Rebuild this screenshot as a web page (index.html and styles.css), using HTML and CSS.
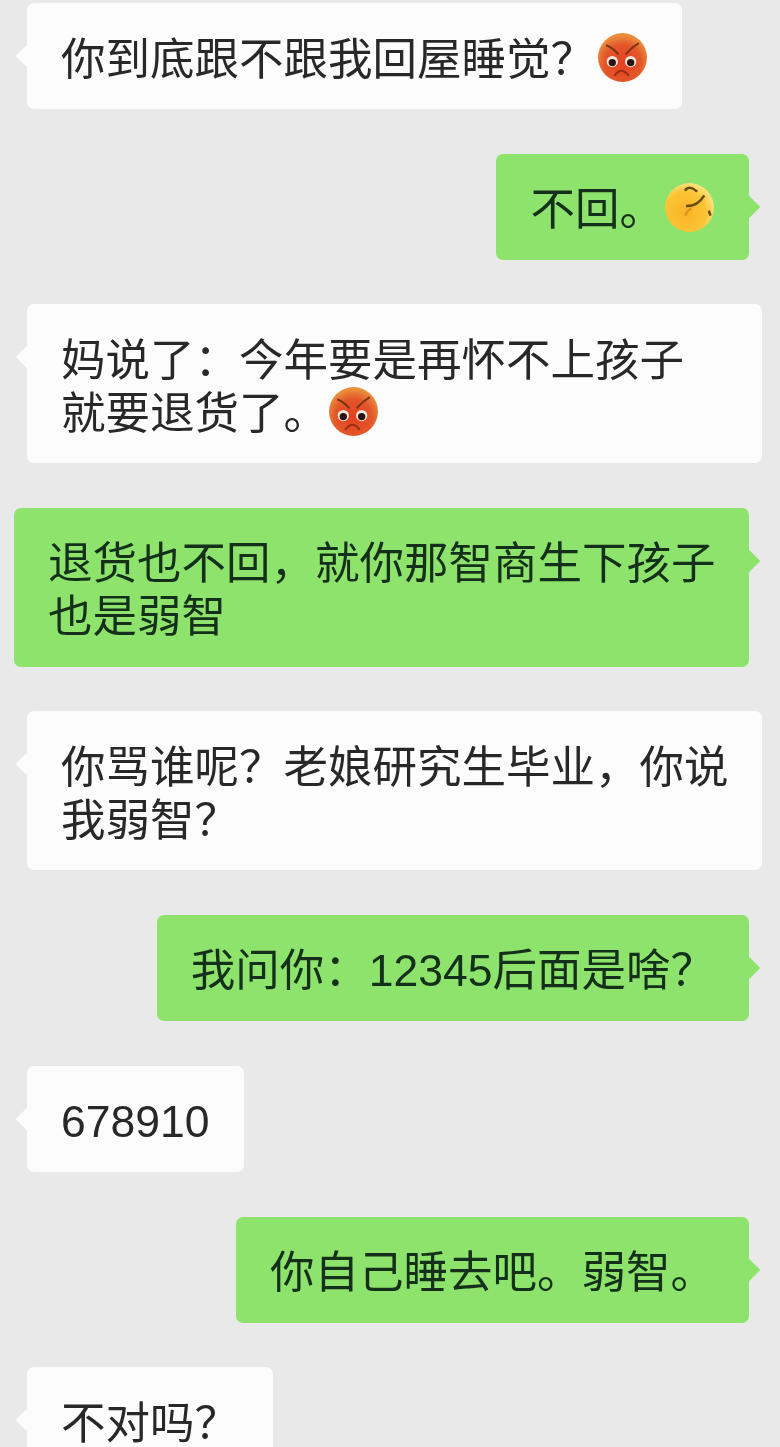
FILE: index.html
```html
<!DOCTYPE html>
<html lang="zh-CN">
<head>
  <meta charset="UTF-8">
  <title>聊天记录</title>
  <link rel="stylesheet" href="styles.css">
</head>
<body>
  <div class="chat">
    <div class="bubble left">你到底跟不跟我回屋睡觉？<svg class="emoji spaced" viewBox="0 0 50 50"><defs><radialGradient id="angry" cx="50%" cy="62%" r="58%"><stop offset="0%" stop-color="#e2401e"/><stop offset="65%" stop-color="#e4562a"/><stop offset="100%" stop-color="#ea8f3c"/></radialGradient></defs><circle cx="25" cy="25" r="24" fill="url(#angry)"/><path d="M9 13 Q15 15 21 22 M41 11 Q34 15 28 22" fill="none" stroke="#7a3415" stroke-width="2"/><circle cx="15" cy="29" r="5.5" fill="#f7e6dc"/><circle cx="33" cy="29" r="5.5" fill="#f7e6dc"/><circle cx="15" cy="30" r="3.6" fill="#2a1210"/><circle cx="33" cy="30" r="3.6" fill="#2a1210"/><path d="M17 43 Q24 33 31 43" fill="none" stroke="#9c2c14" stroke-width="2"/></svg></div>
    <div class="bubble right">不回。<svg class="emoji" viewBox="0 0 50 50"><defs><radialGradient id="smirk" cx="42%" cy="60%" r="60%"><stop offset="0%" stop-color="#f8b425"/><stop offset="70%" stop-color="#fcc436"/><stop offset="100%" stop-color="#fbe27a"/></radialGradient></defs><circle cx="25" cy="25" r="24" fill="url(#smirk)"/><path d="M20.5 8.5 Q25 2.5 32.5 9.5" fill="none" stroke="#6b4a12" stroke-width="2.4"/><path d="M21.5 23.5 Q33 24 39.5 13" fill="none" stroke="#6b4a12" stroke-width="2.4"/><path d="M21 33 Q22 28 27 26" fill="none" stroke="#d9961f" stroke-width="2.4"/><path d="M44 28 L45.5 33" fill="none" stroke="#6b4a12" stroke-width="2.4"/></svg></div>
    <div class="bubble left wide">妈说了：今年要是再怀不上孩子<br>就要退货了。<svg class="emoji" viewBox="0 0 50 50"><circle cx="25" cy="25" r="24" fill="url(#angry)"/><path d="M9 13 Q15 15 21 22 M41 11 Q34 15 28 22" fill="none" stroke="#7a3415" stroke-width="2"/><circle cx="15" cy="29" r="5.5" fill="#f7e6dc"/><circle cx="33" cy="29" r="5.5" fill="#f7e6dc"/><circle cx="15" cy="30" r="3.6" fill="#2a1210"/><circle cx="33" cy="30" r="3.6" fill="#2a1210"/><path d="M17 43 Q24 33 31 43" fill="none" stroke="#9c2c14" stroke-width="2"/></svg></div>
    <div class="bubble right wide">退货也不回，就你那智商生下孩子<br>也是弱智</div>
    <div class="bubble left wide">你骂谁呢？老娘研究生毕业，你说<br>我弱智？</div>
    <div class="bubble right">我问你：<span class="num">12345</span>后面是啥？</div>
    <div class="bubble left"><span class="num">678910</span></div>
    <div class="bubble right">你自己睡去吧。弱智。</div>
    <div class="bubble left">不对吗？</div>
  </div>
</body>
</html>
```

FILE: styles.css
```css
html,
body {
  margin: 0;
  padding: 0;
  height: 1447px;
  overflow: hidden;
  background-color: #e9e9e9;
}

.chat {
  display: flex;
  flex-direction: column;
  gap: 44.5px;
  padding-top: 3px;
  font-family: "Noto Sans CJK SC", "Liberation Sans", sans-serif;
  font-size: 44.5px;
  line-height: 53px;
}

.bubble {
  position: relative;
  box-sizing: border-box;
  width: fit-content;
  height: fit-content;
  padding: 25.5px 34px 27.5px;
  border-radius: 7px;
  white-space: nowrap;
  filter: blur(0.6px);
}

.bubble.wide {
  width: 735px;
}

.bubble::after {
  content: "";
  position: absolute;
  top: 45px;
  width: 16px;
  height: 16px;
  transform: rotate(45deg);
  background-color: inherit;
}

.left {
  align-self: flex-start;
  margin-left: 27px;
  background-color: #fcfcfc;
  color: #282828;
}

.left::after {
  left: -8px;
}

.right {
  align-self: flex-end;
  margin-right: 31px;
  background-color: #8de36b;
  color: #14301a;
}

.right::after {
  right: -8px;
}

.num {
  font-family: "Liberation Sans", sans-serif;
  line-height: 1;
}

.emoji {
  width: 51px;
  height: 51px;
  margin-block: -14px;
  vertical-align: 6px;
  filter: blur(0.6px);
}

.emoji.spaced {
  margin-left: 2px;
}
```
